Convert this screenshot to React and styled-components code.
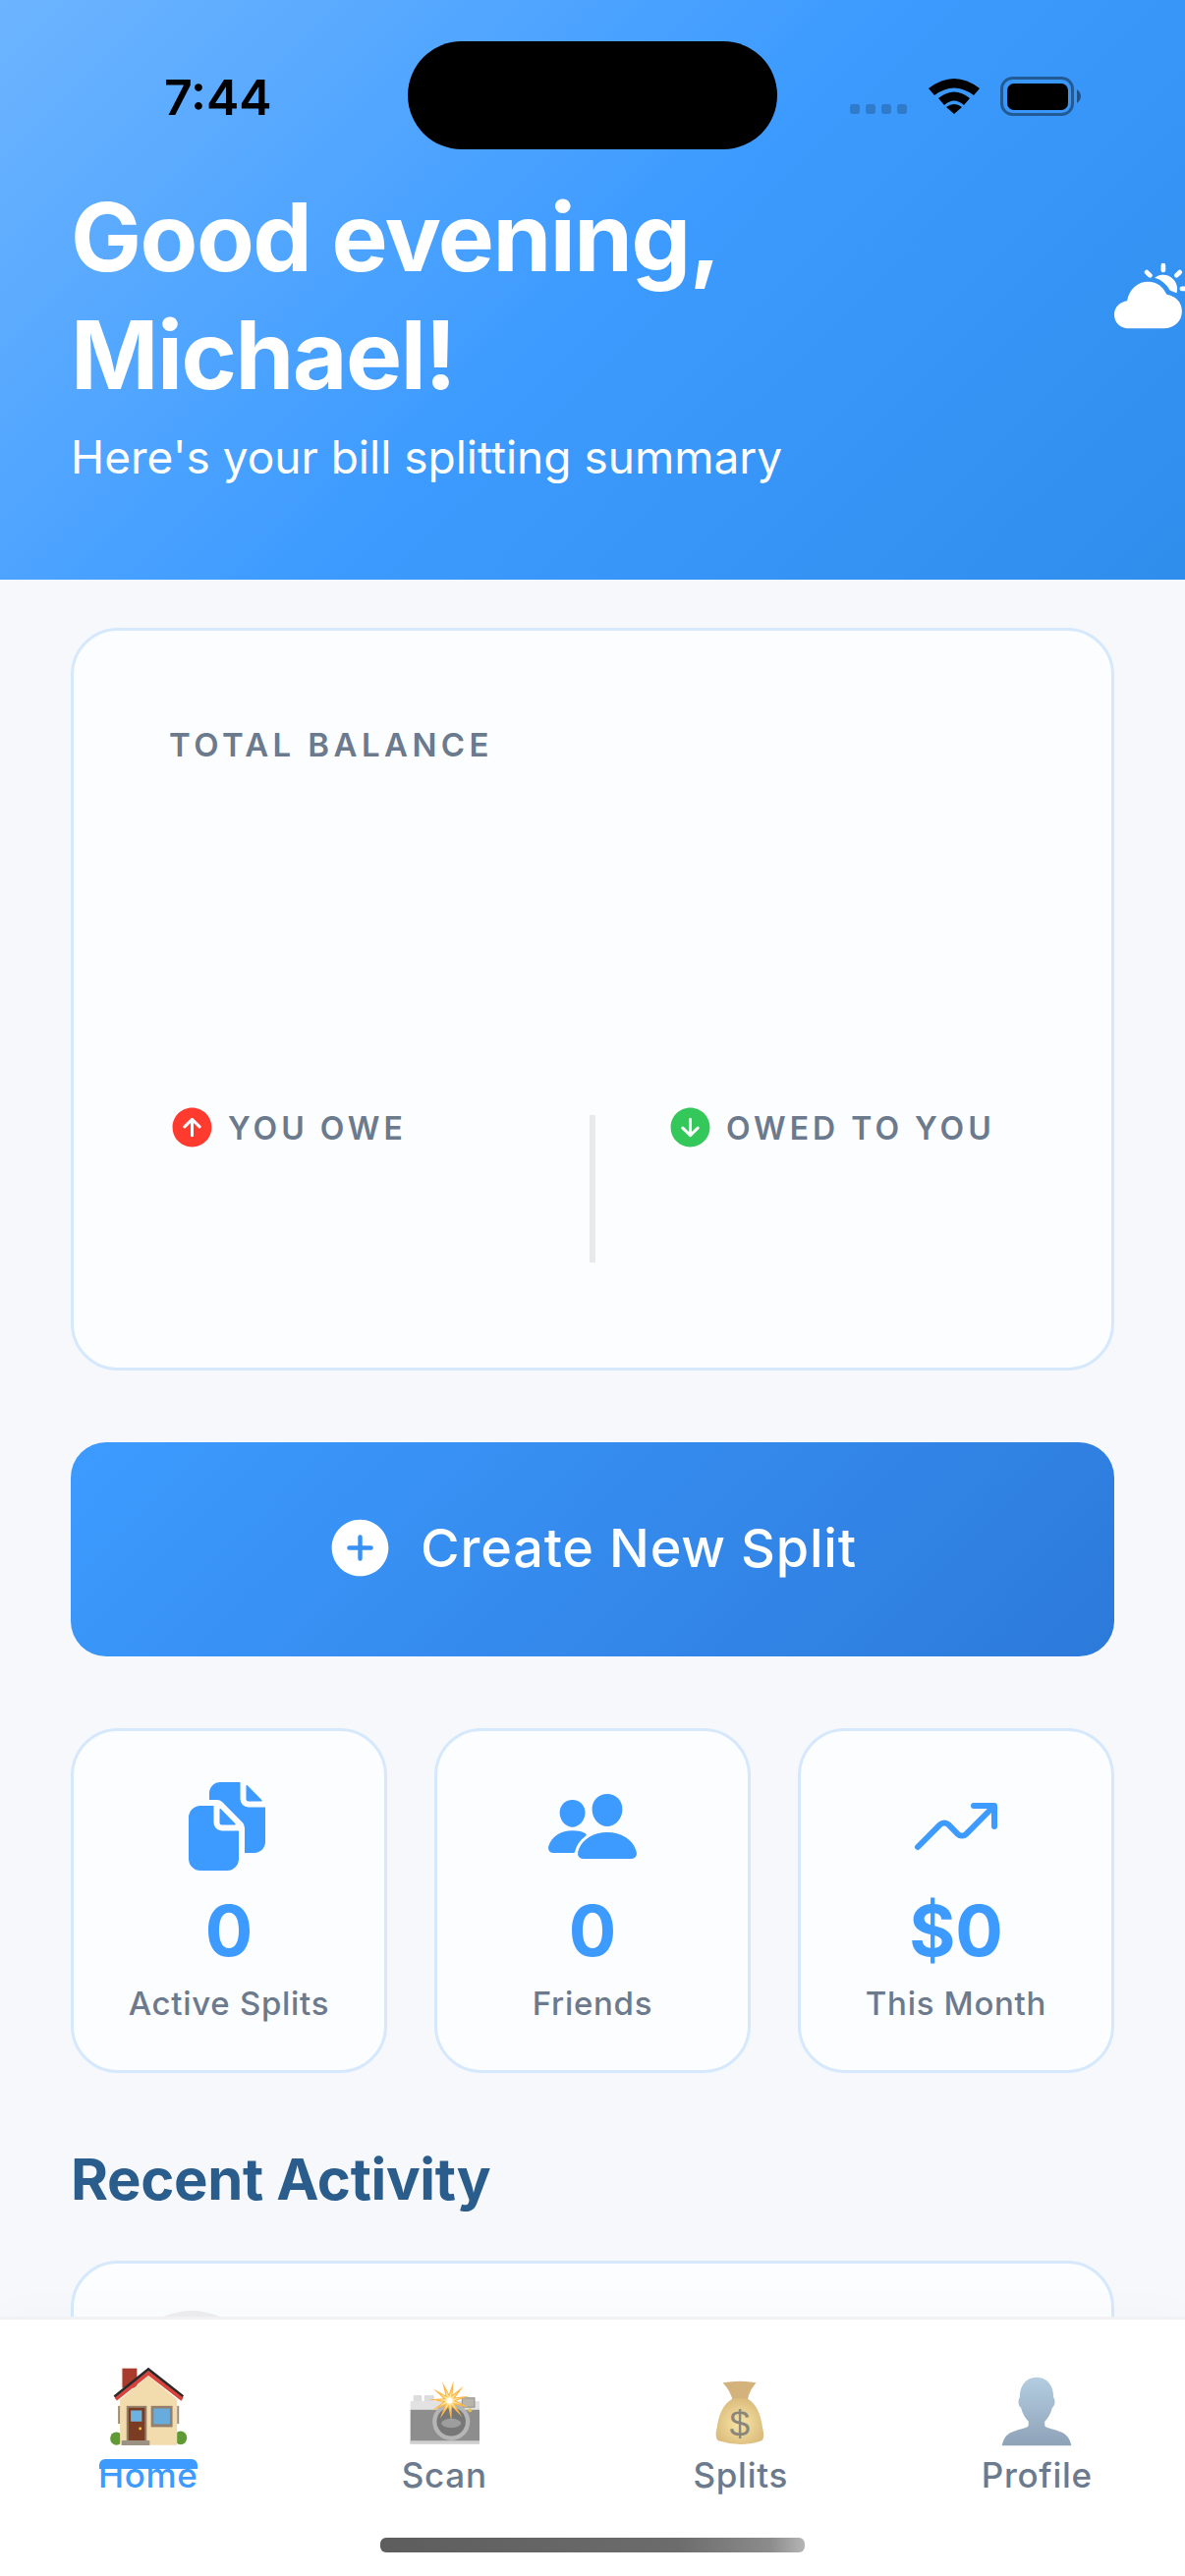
import React from "react";
import styled, { createGlobalStyle } from "styled-components";
import {
  IoAddCircle,
  IoArrowDownCircle,
  IoArrowUpCircle,
  IoDocuments,
  IoPartlySunny,
  IoPeople,
  IoTrendingUp,
} from "react-icons/io5";

const GlobalStyle = createGlobalStyle`
  html, body {
    margin: 0;
    padding: 0;
    background: #f6f8fb;
  }
  * {
    box-sizing: border-box;
  }
`;

const Screen = styled.div`
  width: 1206px;
  height: 2622px;
  display: flex;
  flex-direction: column;
  overflow: hidden;
  background: #f6f8fb;
  font-family: Inter, "Liberation Sans", sans-serif;
`;

const Header = styled.header`
  flex: 0 0 590px;
  padding: 42px 72px 0;
  overflow: hidden;
  background: linear-gradient(135deg, #6db4ff 0%, #3d9bff 50%, #2f8dec 100%);
`;

const StatusBar = styled.div`
  height: 110px;
  margin: 0 -72px;
  display: grid;
  grid-template-columns: 415px 376px 415px;
`;

const Time = styled.div`
  padding: 26px 0 0 167px;
  font-size: 50px;
  line-height: 62px;
  font-weight: 600;
  color: #000;
`;

const Island = styled.div`
  background: #000;
  border-radius: 55px;
`;

const StatusRight = styled.div`
  display: flex;
  align-items: flex-start;
  padding: 36px 0 0 74px;
`;

const SignalDots = styled.div`
  display: flex;
  gap: 6px;
  margin-top: 28px;
`;

const Dot = styled.span`
  width: 10px;
  height: 10px;
  border-radius: 3px;
  background: rgba(0, 0, 0, 0.2);
`;

const WifiIcon = styled.svg`
  width: 52px;
  height: 38px;
  margin-left: 22px;
`;

const BatteryIcon = styled.svg`
  width: 84px;
  height: 40px;
  margin-left: 21px;
`;

const GreetingRow = styled.div`
  display: flex;
  align-items: center;
  margin-top: 29px;
`;

const Greeting = styled.h1`
  flex: 0 0 100%;
  margin: 0;
  font-size: 96px;
  line-height: 120px;
  font-weight: 700;
  letter-spacing: -1.5px;
  color: #fff;
`;

const WeatherIcon = styled(IoPartlySunny)`
  flex: 0 0 auto;
  width: 76px;
  height: 76px;
  color: #fff;
`;

const Subtitle = styled.p`
  margin: 14px 0 0;
  font-size: 46px;
  line-height: 60px;
  font-weight: 400;
  color: #fff;
`;

const Main = styled.main`
  flex: 1 1 0;
  min-height: 0;
  overflow: hidden;
  padding: 49px 72px 0;
`;

const Card = styled.section`
  background: #fcfdfe;
  border: 3px solid #d6e8fc;
  border-radius: ${(p) => p.$radius || 48}px;
`;

const BalanceCard = styled(Card)`
  height: 756px;
  padding: 95px 97px 0;
`;

const CapsLabel = styled.div`
  height: 40px;
  font-size: ${(p) => (p.$large ? 33 : 32)}px;
  line-height: 42px;
  font-weight: 600;
  letter-spacing: ${(p) => (p.$large ? 4.4 : 4)}px;
  color: #6c7a8d;
  white-space: nowrap;
`;

const SplitRow = styled.div`
  display: grid;
  grid-template-columns: 428px 6px 428px;
  height: 166px;
  margin-top: 350px;
`;

const SplitCol = styled.div`
  padding-left: ${(p) => p.$inset}px;
`;

const SplitHead = styled.div`
  display: flex;
  align-items: center;
  gap: 16px;
`;

const Divider = styled.div`
  align-self: center;
  height: 150px;
  background: #e8e9eb;
`;

const UpChip = styled(IoArrowUpCircle)`
  width: 49px;
  height: 49px;
  margin: -4px;
  color: #ff3b30;
`;

const DownChip = styled(IoArrowDownCircle)`
  width: 49px;
  height: 49px;
  margin: -4px;
  color: #34c759;
`;

const CreateButton = styled.button`
  width: 100%;
  height: 218px;
  margin-top: 73px;
  padding: 0 0 4px 3px;
  display: flex;
  align-items: center;
  justify-content: center;
  gap: 32px;
  border: 0;
  border-radius: 36px;
  font-family: inherit;
  font-size: 54px;
  font-weight: 500;
  letter-spacing: 0.8px;
  color: #fff;
  background: linear-gradient(135deg, #3d9bff 0%, #2c7ada 100%);
`;

const PlusIcon = styled(IoAddCircle)`
  width: 71px;
  height: 71px;
  margin: -6px;
`;

const StatsGrid = styled.div`
  display: grid;
  grid-template-columns: repeat(3, 1fr);
  gap: 48px;
  margin-top: 73px;
`;

const StatCard = styled(Card)`
  height: 351px;
  padding-top: 49px;
  display: flex;
  flex-direction: column;
  align-items: center;
`;

const StatIcon = styled.div`
  height: 96px;
  display: flex;
  align-items: center;
  justify-content: center;
  margin-right: ${(p) => p.$nudge || 0}px;
  font-size: ${(p) => p.$size}px;
  color: #3d9bff;
`;

const StatValue = styled.div`
  margin-top: 18px;
  font-size: 72px;
  line-height: 80px;
  font-weight: 700;
  color: #3d9bff;
`;

const StatLabel = styled.div`
  margin-top: 13px;
  font-size: 33px;
  line-height: 42px;
  font-weight: 500;
  letter-spacing: 0.7px;
  color: #6c7a8d;
`;

const SectionTitle = styled.h2`
  margin: 72px 0 47px;
  font-size: 58px;
  line-height: 72px;
  font-weight: 700;
  letter-spacing: -0.35px;
  color: #2a5d8c;
`;

const ActivityCard = styled(Card)`
  padding: 48px;
`;

const Avatar = styled.div`
  width: 144px;
  height: 144px;
  border-radius: 50%;
  background: #ededef;
`;

const Nav = styled.nav`
  position: relative;
  flex: 0 0 264px;
  display: flex;
  flex-direction: column;
  background: #fff;
  border-top: 3px solid #f1f1f3;
  box-shadow: 0 -10px 40px rgba(0, 0, 0, 0.015);
`;

const NavItems = styled.div`
  display: grid;
  grid-template-columns: repeat(4, 1fr);
  padding-top: 39px;
`;

const NavItem = styled.div`
  position: relative;
  display: flex;
  flex-direction: column;
  align-items: center;
`;

const NavIcon = styled.div`
  height: 90px;
  display: flex;
  align-items: flex-end;
`;

const NavLabel = styled.span`
  position: relative;
  margin-top: 8px;
  font-size: 35px;
  line-height: 42px;
  font-weight: 500;
  letter-spacing: 0.7px;
  color: ${(p) => (p.$active ? "#3d9bff" : "#6c7a8d")};
`;

const ActiveBar = styled.span`
  position: absolute;
  top: 5px;
  left: 1px;
  right: 1px;
  height: 10px;
  border-radius: 6px 6px 0 0;
  background: #3d9bff;
`;

const HomeIndicator = styled.div`
  align-self: center;
  width: 432px;
  height: 15px;
  margin-top: 43px;
  border-radius: 6px;
  background: linear-gradient(90deg, #5d5d5d 0%, #6c6c6c 70%, #8c8c8c 92%, #b5b5b5 100%);
`;

const starPoints = (cx, cy, outer, inner, count) =>
  Array.from({ length: count * 2 }, (_, i) => {
    const r = i % 2 ? inner : outer;
    const a = (Math.PI * i) / count - Math.PI / 2 + 0.2;
    return `${cx + r * Math.cos(a)},${cy + r * Math.sin(a)}`;
  }).join(" ");

const HouseEmoji = () => (
  <svg width="80" height="81" viewBox="150 80 240 244">
    <rect x="190" y="85" width="45" height="60" fill="#a93b2d" />
    <ellipse cx="172" cy="300" rx="19" ry="20" fill="#5f9a34" />
    <ellipse cx="369" cy="298" rx="19" ry="21" fill="#5f9a34" />
    <polygon points="183,180 270,108 358,180 358,320 183,320" fill="#f2dcae" />
    <rect x="177" y="200" width="6" height="55" fill="#a08c74" />
    <rect x="358" y="200" width="6" height="55" fill="#a08c74" />
    <polyline points="166,172 270,88 376,172" fill="none" stroke="#2a2a2a" strokeWidth="9" />
    <polyline points="170,180 270,100 374,180" fill="none" stroke="#d8423a" strokeWidth="11" />
    <rect x="203" y="200" width="62" height="106" fill="#94806a" />
    <rect x="209" y="206" width="50" height="100" fill="#7b3c24" />
    <rect x="216" y="214" width="34" height="34" fill="#6db3e2" />
    <circle cx="245" cy="270" r="4.5" fill="#f5c33b" />
    <rect x="278" y="200" width="66" height="65" fill="#94806a" />
    <rect x="286" y="208" width="50" height="48" fill="#68abdd" />
    <rect x="188" y="306" width="86" height="15" fill="#9c9284" />
  </svg>
);

const CameraEmoji = () => (
  <svg width="77" height="67" viewBox="1060 125 230 200">
    <rect x="1080" y="170" width="26" height="24" rx="4" fill="#dcdcdc" />
    <rect x="1113" y="170" width="30" height="24" rx="4" fill="#dcdcdc" />
    <rect x="1071" y="188" width="210" height="30" fill="#e2e2e2" />
    <rect x="1071" y="214" width="210" height="103" fill="#8d8d8d" />
    <rect x="1071" y="308" width="210" height="9" fill="#d0d0d0" />
    <rect x="1228" y="178" width="38" height="28" fill="#b9b4aa" stroke="#8d8d8d" strokeWidth="3" />
    <circle cx="1252" cy="215" r="6" fill="#e8c050" />
    <circle cx="1195" cy="250" r="57" fill="#b5b5b5" />
    <circle cx="1195" cy="250" r="44" fill="#777" />
    <ellipse cx="1195" cy="255" rx="30" ry="14" fill="#9d9d9d" />
    <polygon points={starPoints(1190, 186, 62, 20, 11)} fill="#fbb84c" />
    <polygon points={starPoints(1190, 186, 34, 12, 11)} fill="#ffe59a" />
    <circle cx="1190" cy="186" r="9" fill="#fff" />
  </svg>
);

const BagEmoji = () => (
  <svg width="53" height="68" viewBox="200 122 160 205">
    <defs>
      <radialGradient id="bag" cx="50%" cy="55%" r="60%">
        <stop offset="0%" stopColor="#f8e6a8" />
        <stop offset="100%" stopColor="#d8b878" />
      </radialGradient>
    </defs>
    <path d="M226 132 Q278 122 328 132 Q306 158 302 186 L256 186 Q250 158 226 132Z" fill="#d3b27c" />
    <path d="M254 182 Q278 176 304 182 Q340 205 348 270 Q356 300 346 310 Q280 332 212 310 Q200 300 208 270 Q216 205 254 182Z" fill="url(#bag)" />
    <text x="278" y="296" textAnchor="middle" fontFamily="Liberation Sans, sans-serif" fontSize="112" fill="#8c867a">$</text>
  </svg>
);

const BustEmoji = () => (
  <svg width="72" height="71" viewBox="1076 118 218 214">
    <defs>
      <linearGradient id="bust" x1="0" y1="0" x2="0" y2="1">
        <stop offset="0%" stopColor="#b4cde1" />
        <stop offset="100%" stopColor="#8ea2b8" />
      </linearGradient>
    </defs>
    <path
      d="M1185 120 C1218 120 1237 145 1237 182 C1243 190 1243 206 1233 214 C1228 236 1216 250 1210 256 L1210 268 C1214 282 1268 278 1284 308 C1288 315 1290 322 1292 330 L1078 330 C1080 322 1082 315 1086 308 C1102 278 1156 282 1160 268 L1160 256 C1154 250 1142 236 1137 214 C1127 206 1127 190 1133 182 C1133 145 1152 120 1185 120Z"
      fill="url(#bust)"
    />
  </svg>
);

const navItems = [
  { label: "Home", Icon: HouseEmoji, active: true },
  { label: "Scan", Icon: CameraEmoji },
  { label: "Splits", Icon: BagEmoji },
  { label: "Profile", Icon: BustEmoji },
];

const stats = [
  { Icon: IoDocuments, value: "0", label: "Active Splits", size: 96, nudge: 4 },
  { Icon: IoPeople, value: "0", label: "Friends", size: 96 },
  { Icon: IoTrendingUp, value: "$0", label: "This Month", size: 96 },
];

const App = () => {
  return (
    <Screen>
      <GlobalStyle />
      <Header>
        <StatusBar>
          <Time>7:44</Time>
          <Island />
          <StatusRight>
            <SignalDots>
              <Dot />
              <Dot />
              <Dot />
              <Dot />
            </SignalDots>
            <WifiIcon viewBox="0 0 52 38">
              <path d="M0 12 Q26 -8 52 12 L46 19 Q26 4 6 19Z" fill="#000" />
              <path d="M10 24 Q26 11 42 24 L36 31 Q26 22 16 31Z" fill="#000" transform="translate(0 -2)" />
              <path d="M18 31 Q26 25 34 31 L26 38Z" fill="#000" />
            </WifiIcon>
            <BatteryIcon viewBox="0 0 84 40">
              <rect x="1.5" y="1.5" width="72" height="37" rx="11" fill="none" stroke="rgba(0,0,0,0.4)" strokeWidth="3" />
              <rect x="7" y="7" width="62" height="27" rx="7" fill="#000" />
              <path d="M78 13 Q82 16 82 20 Q82 24 78 27Z" fill="rgba(0,0,0,0.45)" />
            </BatteryIcon>
          </StatusRight>
        </StatusBar>
        <GreetingRow>
          <Greeting>
            Good evening,
            <br />
            Michael!
          </Greeting>
          <WeatherIcon />
        </GreetingRow>
        <Subtitle>Here's your bill splitting summary</Subtitle>
      </Header>

      <Main>
        <BalanceCard>
          <CapsLabel $large>TOTAL BALANCE</CapsLabel>
          <SplitRow>
            <SplitCol $inset={3}>
              <SplitHead>
                <UpChip />
                <CapsLabel>YOU OWE</CapsLabel>
              </SplitHead>
            </SplitCol>
            <Divider />
            <SplitCol $inset={76}>
              <SplitHead>
                <DownChip />
                <CapsLabel>OWED TO YOU</CapsLabel>
              </SplitHead>
            </SplitCol>
          </SplitRow>
        </BalanceCard>

        <CreateButton>
          <PlusIcon />
          Create New Split
        </CreateButton>

        <StatsGrid>
          {stats.map(({ Icon, value, label, size, nudge }) => (
            <StatCard key={label}>
              <StatIcon $size={size} $nudge={nudge}>
                <Icon />
              </StatIcon>
              <StatValue>{value}</StatValue>
              <StatLabel>{label}</StatLabel>
            </StatCard>
          ))}
        </StatsGrid>

        <SectionTitle>Recent Activity</SectionTitle>
        <ActivityCard>
          <Avatar />
        </ActivityCard>
      </Main>

      <Nav>
        <NavItems>
          {navItems.map(({ label, Icon, active }) => (
            <NavItem key={label}>
              <NavIcon>
                <Icon />
              </NavIcon>
              <NavLabel $active={active}>
                {label}
                {active && <ActiveBar />}
              </NavLabel>
            </NavItem>
          ))}
        </NavItems>
        <HomeIndicator />
      </Nav>
    </Screen>
  );
};

export default App;
